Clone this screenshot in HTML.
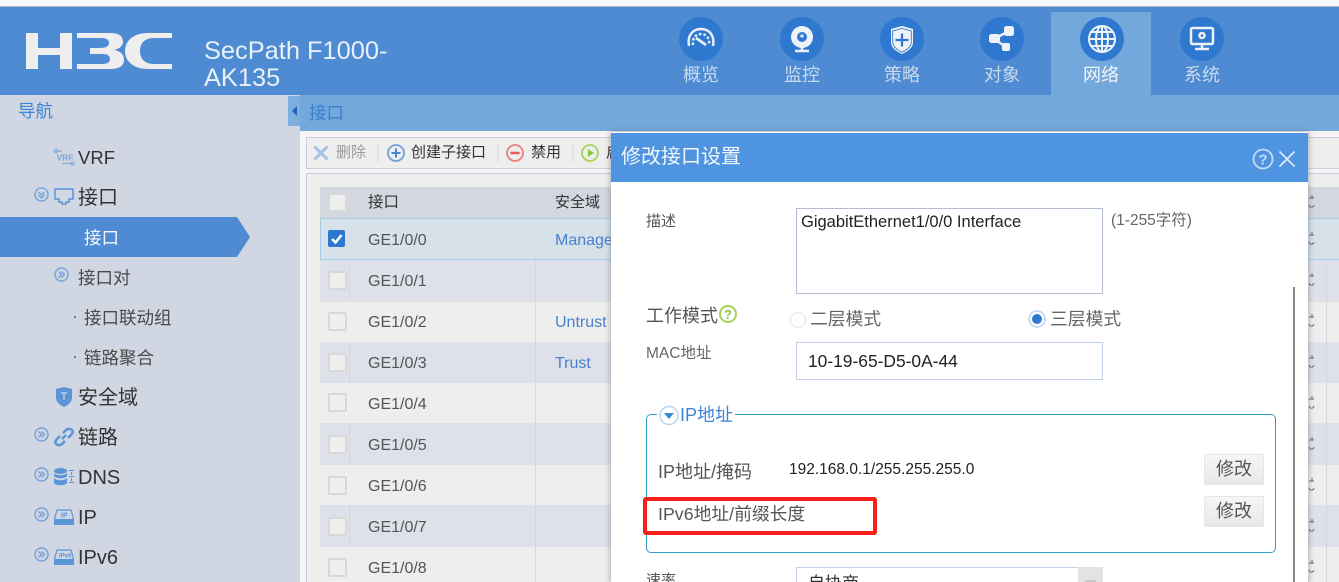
<!DOCTYPE html>
<html lang="zh"><head><meta charset="utf-8"><title>H3C</title>
<style>
html,body{margin:0;padding:0;width:1339px;height:582px;overflow:hidden;background:#fff}
body{position:relative;font-family:"Liberation Sans","Noto Sans CJK SC",sans-serif;color:#444}
.a,.t,svg{position:absolute}
.t{white-space:nowrap;line-height:24px;height:24px}
.nl{font-size:18px;color:#c8daef;width:100px;text-align:center;top:63px}
.n{font-size:17.5px;color:#4a4a4a}
.m{font-size:20px;color:#333}
.r{left:320px;width:1019px}
.c{left:328px;width:15px;height:15px;border:2px solid #d8d8d8;background:#efefef;border-radius:2px}
.g{left:368px;font-size:16px;color:#555}
.b{left:555px;font-size:16px;color:#4a80cc}
.v{width:1px;background:#d4d6da}
.btn{left:1204px;width:58px;height:29px;border:1px solid #e2e6ec;border-radius:2px;background:linear-gradient(#f6f6f6,#e8e8e8);font-size:18px;line-height:29px;text-align:center;color:#555}
</style></head><body>

<div class="a" style="left:0;top:0;width:1339px;height:6px;background:#fafafc"></div>
<div class="a" style="left:0;top:6px;width:1339px;height:1px;background:#b5b9bf"></div>
<div class="a" style="left:0;top:7px;width:1339px;height:88px;background:#4f8bd2"></div>

<svg style="left:26px;top:33px" width="146" height="36" viewBox="0 0 146 36" fill="#eeeeee">
<path d="M0 0H12V15H34V0H46V36H34V22H12V36H0Z"/>
<path d="M51 0H84C93 0 97 3 97 9C97 13 93 16 88 17C94 18 98 21 98 27C98 33 93 36 84 36H51V31H76C82 31 84 29 84 26C84 23 82 21 76 21H64V15H74C80 15 83 13 83 10C83 7 81 5 75 5H51Z"/>
<path d="M146 0V5H128C118 5 114 11 114 18C114 25 118 31 128 31H146V36H122C107 36 99 28 99 18C99 8 107 0 122 0Z"/>
</svg>
<div class="t" style="left:204px;top:37px;font-size:25.4px;line-height:28px;height:28px;color:#e8f0f8">SecPath F1000-</div>
<div class="t" style="left:204px;top:64px;font-size:25.4px;line-height:28px;height:28px;color:#e8f0f8">AK135</div>

<div class="a" style="left:1051px;top:12px;width:100px;height:83px;background:#73a8dc"></div>
<svg style="left:679px;top:17px" width="44" height="44" viewBox="0 0 44 44"><circle cx="22" cy="22" r="22" fill="#2f78d0"/>
<path d="M10 29C8 18 14 12 22 12S36 18 34 29" fill="none" stroke="#e8eef6" stroke-width="2.5"/><path d="M14 28C13 21 17 17 22 17S31 21 30 28" fill="none" stroke="#e8eef6" stroke-width="2.5" stroke-dasharray="2.500 2"/><path d="M17 21L27 28" stroke="#e8eef6" stroke-width="2.800"/></svg>
<svg style="left:780px;top:17px" width="44" height="44" viewBox="0 0 44 44"><circle cx="22" cy="22" r="22" fill="#2f78d0"/>
<circle cx="22" cy="20" r="11" fill="#eef2f7"/><circle cx="22" cy="20" r="5" fill="#2f78d0"/><circle cx="22" cy="19" r="1.800" fill="#cfe0f2"/><path d="M22 30v3M15 34H29" stroke="#eef2f7" stroke-width="2.500"/></svg>
<svg style="left:880px;top:17px" width="44" height="44" viewBox="0 0 44 44"><circle cx="22" cy="22" r="22" fill="#2f78d0"/>
<path d="M22 9L33 12V25C33 31 28 34 22 37C16 34 11 31 11 25V12Z" fill="#eef2f7"/><path d="M22 11.500L31.300 14V25C31.300 29.800 27 32.800 22 35.200C17 32.800 12.700 29.800 12.700 25V14Z" fill="none" stroke="#2f78d0" stroke-width=".9"/><path d="M22 16.500V29.500M15.500 23H28.500" stroke="#2f78d0" stroke-width="2.200"/></svg>
<svg style="left:980px;top:17px" width="44" height="44" viewBox="0 0 44 44"><circle cx="22" cy="22" r="22" fill="#2f78d0"/>
<path d="M29 14L14 22L26 30" fill="none" stroke="#eef2f7" stroke-width="2.500"/><rect x="24" y="9" width="10" height="10" rx="2.500" fill="#eef2f7"/><rect x="9" y="17" width="11" height="9" rx="2.500" fill="#eef2f7"/><rect x="22" y="26" width="8" height="8" rx="2" fill="#eef2f7"/></svg>
<svg style="left:1080px;top:17px" width="44" height="44" viewBox="0 0 44 44"><circle cx="22" cy="22" r="22" fill="#2f78d0"/>
<g fill="none" stroke="#eef2f7" stroke-width="2"><circle cx="22" cy="22" r="13"/><ellipse cx="22" cy="22" rx="6" ry="13"/><path d="M22 9V35M9 22H35M11 15H33M11 29H33"/></g></svg>
<svg style="left:1180px;top:17px" width="44" height="44" viewBox="0 0 44 44"><circle cx="22" cy="22" r="22" fill="#2f78d0"/>
<rect x="11" y="11" width="22" height="16" rx="1.500" fill="none" stroke="#eef2f7" stroke-width="2.500"/><circle cx="22" cy="18.500" r="3.800" fill="#eef2f7"/><circle cx="22" cy="18.500" r="1.300" fill="#2f78d0"/><path d="M22 27V31M15 32H29" stroke="#eef2f7" stroke-width="2.500"/></svg>
<div class="t nl" style="left:651px">概览</div>
<div class="t nl" style="left:752px">监控</div>
<div class="t nl" style="left:852px">策略</div>
<div class="t nl" style="left:952px">对象</div>
<div class="t nl" style="left:1051px;color:#f0f5fa">网络</div>
<div class="t nl" style="left:1152px">系统</div>

<!-- sidebar -->
<div class="a" style="left:0;top:95px;width:300px;height:487px;background:#d0d7e3"></div>
<div class="t" style="left:18px;top:99px;font-size:17.5px;color:#3d85d8">导航</div>
<div class="a" style="left:288px;top:96px;width:12px;height:30px;background:#7cafe0"></div>
<svg style="left:291px;top:105px" width="6" height="12"><path d="M6 1V11L1 6Z" fill="#1f63b5"/></svg>
<svg style="left:0;top:217px" width="250" height="40"><path d="M0 0H237L250 20L237 40H0Z" fill="#4f8bd2"/></svg>

<svg style="left:54px;top:149px" width="21" height="17" viewBox="0 0 21 17" fill="none" stroke="#7ba7dc" stroke-width="1.200"><circle cx="2" cy="2" r="1.500"/><path d="M4 2H8"/><circle cx="18.500" cy="14.500" r="1.500"/><path d="M8 14.500H17"/><text x="2.500" y="11.500" font-size="8.500" font-weight="700" fill="#7ba7dc" stroke="none" font-family="Liberation Sans">VRF</text></svg>
<div class="t" style="left:78px;top:146px;font-size:18.500px;color:#333">VRF</div>

<svg style="left:34px;top:187px" width="15" height="15" viewBox="0 0 15 15"><circle cx="7.500" cy="7.500" r="6.500" fill="none" stroke="#77a4dc" stroke-width="1.500"/><path d="M4.500 5L7.500 8L10.500 5M4.500 8L7.500 11L10.500 8" fill="none" stroke="#77a4dc" stroke-width="1.500"/></svg>
<svg style="left:54px;top:188px" width="20" height="17" viewBox="0 0 20 17"><path d="M1 1H19V11H15V14H12V16H8V14H5V11H1Z" fill="none" stroke="#5c94d8" stroke-width="1.500"/></svg>
<div class="t m" style="left:78px;top:186px">接口</div>

<div class="a" style="left:74px;top:236px;width:2px;height:2px;background:#3d85d8"></div>
<div class="t" style="left:84px;top:226px;font-size:17.500px;color:#f2f6fb">接口</div>

<svg style="left:54px;top:267px" width="15" height="15" viewBox="0 0 15 15"><circle cx="7.500" cy="7.500" r="6.500" fill="none" stroke="#77a4dc" stroke-width="1.500"/><path d="M4.500 4.500L7.500 7.500L4.500 10.500M7.500 4.500L10.500 7.500L7.500 10.500" fill="none" stroke="#77a4dc" stroke-width="1.500"/></svg>
<div class="t n" style="left:78px;top:266px">接口对</div>
<div class="a" style="left:74px;top:316px;width:2px;height:2px;background:#3d85d8"></div>
<div class="t n" style="left:84px;top:306px">接口联动组</div>
<div class="a" style="left:74px;top:356px;width:2px;height:2px;background:#3d85d8"></div>
<div class="t n" style="left:84px;top:346px">链路聚合</div>

<svg style="left:56px;top:387px" width="16" height="20" viewBox="0 0 16 20"><path d="M8 0L16 2V11C16 15 12 18 8 20C4 18 0 15 0 11V2Z" fill="#5c94d8"/><path d="M5 6H11M8 6V13" stroke="#cfdcee" stroke-width="1.200"/></svg>
<div class="t m" style="left:78px;top:386px">安全域</div>

<svg style="left:34px;top:427px" width="15" height="15" viewBox="0 0 15 15"><circle cx="7.500" cy="7.500" r="6.500" fill="none" stroke="#77a4dc" stroke-width="1.500"/><path d="M4.500 4.500L7.500 7.500L4.500 10.500M7.500 4.500L10.500 7.500L7.500 10.500" fill="none" stroke="#77a4dc" stroke-width="1.500"/></svg>
<svg style="left:54px;top:427px" width="20" height="20" viewBox="0 0 20 20" fill="none" stroke="#5c94d8" stroke-width="2.500"><path d="M8 12L12 8"/><path d="M9 6L12 3C14 1 17 2 18 3S19 6 17 8L14 11"/><path d="M11 14L8 17C6 19 3 18 2 17S1 14 3 12L6 9"/></svg>
<div class="t m" style="left:78px;top:426px">链路</div>

<svg style="left:34px;top:467px" width="15" height="15" viewBox="0 0 15 15"><circle cx="7.500" cy="7.500" r="6.500" fill="none" stroke="#77a4dc" stroke-width="1.500"/><path d="M4.500 4.500L7.500 7.500L4.500 10.500M7.500 4.500L10.500 7.500L7.500 10.500" fill="none" stroke="#77a4dc" stroke-width="1.500"/></svg>
<svg style="left:54px;top:468px" width="20" height="18" viewBox="0 0 20 18" fill="#5c94d8"><ellipse cx="6.500" cy="3" rx="6.500" ry="3"/><path d="M0 5C2 8 11 8 13 5V8C11 11 2 11 0 8ZM0 10C2 13 11 13 13 10V15C11 18 2 18 0 15Z"/><path d="M15 2h5v1h-5zM17 4h1v3h-1zM15 8h5v1h-5zM17 10h1v3h-1zM15 14h5v1h-5z"/></svg>
<div class="t m" style="left:78px;top:466px">DNS</div>

<svg style="left:34px;top:507px" width="15" height="15" viewBox="0 0 15 15"><circle cx="7.500" cy="7.500" r="6.500" fill="none" stroke="#77a4dc" stroke-width="1.500"/><path d="M4.500 4.500L7.500 7.500L4.500 10.500M7.500 4.500L10.500 7.500L7.500 10.500" fill="none" stroke="#77a4dc" stroke-width="1.500"/></svg>
<svg style="left:54px;top:509px" width="20" height="16" viewBox="0 0 20 16"><path d="M3 1H17L19.500 10V15.500H.5V10Z" fill="none" stroke="#5c94d8" stroke-width="1.200"/><rect x="1" y="10" width="18" height="5" fill="#5c94d8"/><text x="7" y="8.500" font-size="7" font-weight="700" fill="#5c94d8" font-family="Liberation Sans">IP</text></svg>
<div class="t m" style="left:78px;top:506px">IP</div>

<svg style="left:34px;top:547px" width="15" height="15" viewBox="0 0 15 15"><circle cx="7.500" cy="7.500" r="6.500" fill="none" stroke="#77a4dc" stroke-width="1.500"/><path d="M4.500 4.500L7.500 7.500L4.500 10.500M7.500 4.500L10.500 7.500L7.500 10.500" fill="none" stroke="#77a4dc" stroke-width="1.500"/></svg>
<svg style="left:54px;top:549px" width="20" height="16" viewBox="0 0 20 16"><path d="M3 1H17L19.500 10V15.500H.5V10Z" fill="none" stroke="#5c94d8" stroke-width="1.200"/><rect x="1" y="10" width="18" height="5" fill="#5c94d8"/><text x="5" y="8.500" font-size="6" font-weight="700" fill="#5c94d8" font-family="Liberation Sans">IPv6</text></svg>
<div class="t m" style="left:78px;top:546px">IPv6</div>

<!-- content -->
<div class="a" style="left:300px;top:95px;width:1039px;height:36px;background:#73a8dc"></div>
<div class="t" style="left:309px;top:101px;font-size:17.500px;color:#3b7fd0">接口</div>
<div class="a" style="left:300px;top:131px;width:1039px;height:451px;background:#f5f5f6"></div>
<div class="a" style="left:306px;top:137px;width:1033px;height:30px;background:#eeeeee;border:1px solid #c9cde0"></div>
<div class="a" style="left:306px;top:173px;width:1033px;height:409px;background:#eeeeee;border:1px solid #c9cde0"></div>

<svg style="left:313px;top:145px" width="16" height="16"><path d="M1.500 1.500L14.500 14.500M14.500 1.500L1.500 14.500" stroke="#a3c1e6" stroke-width="3"/></svg>
<div class="t" style="left:336px;top:141px;font-size:15px;color:#999">删除</div>
<div class="a" style="left:377px;top:144px;width:2px;height:18px;background:#e2e2e2"></div>
<svg style="left:387px;top:144px" width="18" height="18"><circle cx="9" cy="9" r="8" fill="none" stroke="#6fa0dc" stroke-width="1.800"/><path d="M9 4.500V13.500M4.500 9H13.500" stroke="#4a86d4" stroke-width="2"/></svg>
<div class="t" style="left:411px;top:141px;font-size:15px;color:#333">创建子接口</div>
<div class="a" style="left:497px;top:144px;width:2px;height:18px;background:#e2e2e2"></div>
<svg style="left:506px;top:144px" width="18" height="18"><circle cx="9" cy="9" r="8" fill="none" stroke="#ee7d7d" stroke-width="1.800"/><path d="M4.500 9H13.500" stroke="#e55" stroke-width="2.500"/></svg>
<div class="t" style="left:531px;top:141px;font-size:15px;color:#333">禁用</div>
<div class="a" style="left:572px;top:144px;width:2px;height:18px;background:#e2e2e2"></div>
<svg style="left:581px;top:144px" width="18" height="18"><circle cx="9" cy="9" r="8" fill="none" stroke="#a6d35a" stroke-width="1.800"/><path d="M7 5L13 9L7 13Z" fill="#8cc63f"/></svg>
<div class="t" style="left:606px;top:141px;font-size:15px;color:#333">启用</div>

<!-- table -->
<div class="a r" style="top:187px;height:31px;background:#d3d8e0"></div>
<div class="a" style="left:328px;top:193px;width:15px;height:15px;border:2px solid #d8d8d8;background:#eeeeee"></div>
<div class="t" style="left:368px;top:191px;font-size:15.500px;color:#333">接口</div>
<div class="t" style="left:555px;top:191px;font-size:15px;color:#333">安全域</div>

<div class="a r" style="top:218px;height:40px;background:#d6e1e9;border:1px solid #a8cde6;box-sizing:content-box;width:1019px"></div>
<div class="a" style="left:328px;top:230px;width:17px;height:17px;background:#2f78d0;border-radius:2px"></div>
<svg style="left:328px;top:230px" width="17" height="17"><path d="M4 9L7.500 12.500L13.500 5" fill="none" stroke="#fff" stroke-width="2.500"/></svg>
<div class="t g" style="top:229px">GE1/0/0</div>
<div class="t b" style="top:229px">Management</div>

<div class="a r" style="top:260px;height:41px;background:#dee1e9"></div>
<div class="a r" style="top:301px;height:41px;background:#eeeeee;border-top:1px solid #e2e2e4;box-sizing:border-box"></div>
<div class="a r" style="top:342px;height:41px;background:#dee1e9"></div>
<div class="a r" style="top:383px;height:40px;background:#eeeeee"></div>
<div class="a r" style="top:423px;height:42px;background:#dee1e9"></div>
<div class="a r" style="top:465px;height:40px;background:#eeeeee"></div>
<div class="a r" style="top:505px;height:42px;background:#dee1e9"></div>
<div class="a r" style="top:547px;height:35px;background:#eeeeee"></div>

<div class="a v" style="left:349px;top:260px;height:41px"></div>
<div class="a v" style="left:349px;top:342px;height:41px"></div>
<div class="a v" style="left:349px;top:423px;height:42px"></div>
<div class="a v" style="left:349px;top:505px;height:42px"></div>
<div class="a v" style="left:535px;top:260px;height:322px"></div>
<div class="a v" style="left:1326px;top:260px;height:322px"></div>

<div class="a c" style="top:271px"></div><div class="t g" style="top:270px">GE1/0/1</div>
<div class="a c" style="top:312px"></div><div class="t g" style="top:311px">GE1/0/2</div><div class="t b" style="top:311px">Untrust</div>
<div class="a c" style="top:353px"></div><div class="t g" style="top:352px">GE1/0/3</div><div class="t b" style="top:352px">Trust</div>
<div class="a c" style="top:393px"></div><div class="t g" style="top:393px">GE1/0/4</div>
<div class="a c" style="top:435px"></div><div class="t g" style="top:434px">GE1/0/5</div>
<div class="a c" style="top:476px"></div><div class="t g" style="top:475px">GE1/0/6</div>
<div class="a c" style="top:517px"></div><div class="t g" style="top:516px">GE1/0/7</div>
<div class="a c" style="top:558px"></div><div class="t g" style="top:557px">GE1/0/8</div>

<!-- clipped cell glyph fragments right of dialog -->
<svg style="left:1306px;top:187px" width="12" height="395" viewBox="0 0 12 395" fill="none" stroke="#666" stroke-width="1">
<path d="M3 11h5M6 8v3M3 18c1 3 4 3 5 0"/>
<path d="M3 48h5M6 45v3M3 55c1 3 4 3 5 0"/>
<path d="M3 89h5M6 86v3M3 96c1 3 4 3 5 0"/>
<path d="M3 130h5M6 127v3M3 137c1 3 4 3 5 0"/>
<path d="M3 171h5M6 168v3M3 178c1 3 4 3 5 0"/>
<path d="M3 212h5M6 209v3M3 219c1 3 4 3 5 0"/>
<path d="M3 253h5M6 250v3M3 260c1 3 4 3 5 0"/>
<path d="M3 294h5M6 291v3M3 301c1 3 4 3 5 0"/>
<path d="M3 335h5M6 332v3M3 342c1 3 4 3 5 0"/>
<path d="M3 376h5M6 373v3M3 383c1 3 4 3 5 0"/>
</svg>

<!-- modal -->
<div class="a" style="left:611px;top:132px;width:697px;height:450px;background:#fff;box-shadow:0 0 5px 1px rgba(90,95,105,.45)"></div>
<div class="a" style="left:611px;top:133px;width:697px;height:49px;background:#4f94e0"></div>
<div class="t" style="left:621px;top:145px;font-size:20px;color:#f2f7fc">修改接口设置</div>
<svg style="left:1252px;top:148px" width="22" height="22"><circle cx="11" cy="11" r="9.500" fill="none" stroke="#c6dcf4" stroke-width="1.800"/><text x="11" y="16.500" font-size="15" font-weight="700" text-anchor="middle" fill="#c6dcf4" font-family="Liberation Sans">?</text></svg>
<svg style="left:1278px;top:150px" width="18" height="18"><path d="M1.500 1.500L16.500 16.500M16.500 1.500L1.500 16.500" stroke="#dce9f8" stroke-width="1.800"/></svg>

<div class="t" style="left:646px;top:210px;font-size:15px;color:#555">描述</div>
<div class="a" style="left:796px;top:208px;width:305px;height:84px;border:1px solid #b4bccf;background:#fff"></div>
<div class="t" style="left:801px;top:210px;font-size:16.500px;color:#222">GigabitEthernet1/0/0 Interface</div>
<div class="t" style="left:1111px;top:209px;font-size:15.500px;color:#666">(1-255字符)</div>

<div class="t" style="left:646px;top:304px;font-size:18px;color:#555">工作模式</div>
<svg style="left:718px;top:304px" width="20" height="20"><circle cx="10" cy="10" r="8" fill="none" stroke="#a6d35a" stroke-width="2"/><text x="10" y="15" font-size="13" font-weight="700" text-anchor="middle" fill="#8cc63f" font-family="Liberation Sans">?</text></svg>
<svg style="left:789px;top:311px" width="18" height="18"><circle cx="9" cy="9" r="7.500" fill="#fff" stroke="#ececec" stroke-width="1.500"/></svg>
<div class="t" style="left:810px;top:307px;font-size:17.800px;color:#666">二层模式</div>
<svg style="left:1028px;top:310px" width="18" height="18"><circle cx="9" cy="9" r="8" fill="#fff" stroke="#b8d4f2" stroke-width="1.500"/><circle cx="9" cy="9" r="5" fill="#2f78d0"/></svg>
<div class="t" style="left:1050px;top:307px;font-size:17.800px;color:#666">三层模式</div>

<div class="t" style="left:646px;top:342px;font-size:15.500px;color:#666">MAC地址</div>
<div class="a" style="left:796px;top:342px;width:305px;height:36px;border:1px solid #c3d2e4;background:#fff"></div>
<div class="t" style="left:808px;top:349px;font-size:17.400px;color:#222">10-19-65-D5-0A-44</div>

<div class="a" style="left:1293px;top:287px;width:2px;height:295px;background:#8a8a8a"></div>

<div class="a" style="left:646px;top:414px;width:628px;height:137px;border:1px solid #2f9dc9;border-radius:5px"></div>
<div class="a" style="left:657px;top:408px;width:78px;height:14px;background:#fff"></div>
<svg style="left:659px;top:405px" width="20" height="21"><circle cx="10" cy="10.500" r="9" fill="#fff" stroke="#b8d4f2" stroke-width="1.500"/><path d="M5 8H15L10 14Z" fill="#3d85d8"/></svg>
<div class="t" style="left:680px;top:403px;font-size:18px;color:#3d85d8">IP地址</div>

<div class="t" style="left:658px;top:460px;font-size:18px;color:#555">IP地址/掩码</div>
<div class="t" style="left:789px;top:458px;font-size:15.500px;color:#222">192.168.0.1/255.255.255.0</div>
<div class="a btn" style="top:454px">修改</div>
<div class="t" style="left:658px;top:502px;font-size:17.800px;color:#555">IPv6地址/前缀长度</div>
<div class="a btn" style="top:496px">修改</div>
<div class="a" style="left:643px;top:497px;width:226px;height:30px;border:4px solid #f8201a;border-radius:3px"></div>

<div class="t" style="left:646px;top:569px;font-size:15px;color:#555">速率</div>
<div class="a" style="left:796px;top:567px;width:281px;height:20px;border:1px solid #c3d2e4;background:#fff"></div>
<div class="a" style="left:1078px;top:567px;width:25px;height:15px;background:#e3e3e3"></div>
<div class="a" style="left:1085px;top:580px;width:11px;height:2px;background:#c9c9c9"></div>
<div class="t" style="left:808px;top:572px;font-size:17px;color:#333">自协商</div>

</body></html>
